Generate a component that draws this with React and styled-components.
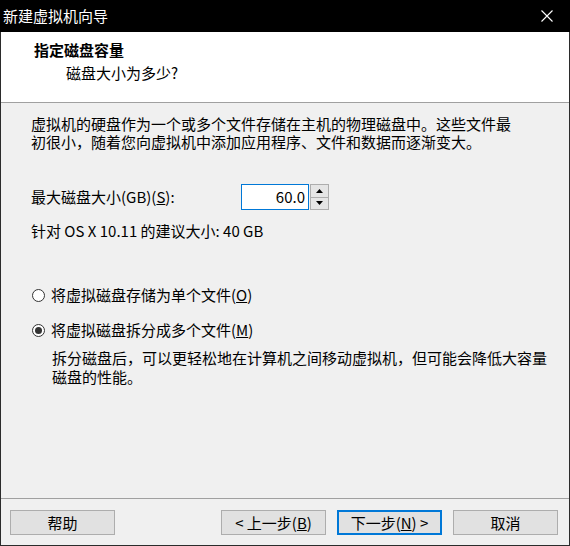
import React from 'react';
import styled, { createGlobalStyle } from 'styled-components';

const GlobalStyle = createGlobalStyle`
  html, body {
    margin: 0;
    padding: 0;
    background: #f0f0f0;
  }
  body {
    font-family: "Noto Sans CJK SC", "Liberation Sans", sans-serif;
    font-size: 15px;
    color: #000;
  }
`;

const Window = styled.div`
  width: 570px;
  height: 546px;
  box-sizing: border-box;
  border: 1px solid #2b2b2b;
  border-top: none;
  display: flex;
  flex-direction: column;
  background: #f0f0f0;
`;

const TitleBar = styled.div`
  height: 32px;
  background: #000;
  color: #fff;
  display: flex;
  align-items: center;
  justify-content: space-between;
  padding-left: 3px;
  line-height: 18px;
  margin: 0 -1px;
`;

const CloseButton = styled.div`
  width: 46px;
  height: 32px;
  display: flex;
  align-items: center;
  justify-content: center;
  margin-right: 0;
`;

const Header = styled.div`
  background: #fff;
  height: 71px;
  border-bottom: 1px solid #a0a0a0;
  padding: 9px 0 0 33px;
  box-sizing: border-box;
  line-height: 18px;
`;

const HeaderTitle = styled.div`
  font-weight: 700;
`;

const HeaderSub = styled.div`
  margin: 5px 0 0 32px;
`;

const Body = styled.div`
  flex: 1;
  padding: 12px 0 0 30px;
  line-height: 18px;
`;

const Paragraph = styled.p`
  margin: 0;
  margin-top: ${(p) => p.$top || 0}px;
  margin-left: ${(p) => p.$indent || 0}px;
  line-height: ${(p) => p.$lh || 18}px;
`;

const SizeRow = styled.div`
  display: flex;
  align-items: center;
  margin-top: 33px;
`;

const SizeLabel = styled.label`
  width: 210px;
`;

const Spinner = styled.div`
  display: flex;
  gap: 1px;
`;

const NumberBox = styled.div`
  width: 68px;
  height: 26px;
  box-sizing: border-box;
  border: 1px solid #0078d7;
  background: #fff;
  display: flex;
  align-items: center;
  justify-content: flex-end;
  padding-right: 3px;
`;

const SpinButtons = styled.div`
  display: flex;
  flex-direction: column;
  width: 19px;
  height: 26px;
`;

const SpinButton = styled.div`
  flex: 1;
  box-sizing: border-box;
  border: 1px solid #adadad;
  border-top: ${(p) => (p.$down ? 'none' : '1px solid #adadad')};
  background: #e5e5e5;
  display: flex;
  align-items: center;
  justify-content: center;
`;

const RadioRow = styled.div`
  display: flex;
  align-items: center;
  margin-top: ${(p) => p.$top}px;
  margin-left: 1px;
`;

const RadioCircle = styled.span`
  width: 13px;
  height: 13px;
  box-sizing: border-box;
  border: 1px solid #333;
  border-radius: 50%;
  background: #fff;
  display: flex;
  align-items: center;
  justify-content: center;
  margin-right: 6px;
  &::after {
    content: '';
    width: 7px;
    height: 7px;
    border-radius: 50%;
    background: ${(p) => (p.$checked ? '#333' : 'transparent')};
  }
`;

const Footer = styled.div`
  border-top: 1px solid #a0a0a0;
  padding: 11px 11px 0 9px;
  height: 47px;
  box-sizing: border-box;
  display: flex;
  gap: 11px;
`;

const Button = styled.div`
  width: 105px;
  height: 25px;
  box-sizing: border-box;
  background: #e1e1e1;
  border: ${(p) => (p.$primary ? '2px solid #0078d7' : '1px solid #adadad')};
  display: flex;
  align-items: center;
  justify-content: center;
  line-height: 18px;
`;

const Spacer = styled.div`
  flex: 1;
`;

function Arrow({ up }) {
  return (
    <svg width="7" height="4" viewBox="0 0 7 4">
      <path d={up ? 'M0 4 L3.5 0 L7 4 Z' : 'M0 0 L3.5 4 L7 0 Z'} fill="#000" />
    </svg>
  );
}

export default function App() {
  return (
    <>
      <GlobalStyle />
      <Window>
        <TitleBar>
          <span>新建虚拟机向导</span>
          <CloseButton>
            <svg width="12" height="12" viewBox="0 0 12 12">
              <path d="M0.5 0.5 L11.5 11.5 M11.5 0.5 L0.5 11.5" stroke="#fff" strokeWidth="1.1" />
            </svg>
          </CloseButton>
        </TitleBar>
        <Header>
          <HeaderTitle>指定磁盘容量</HeaderTitle>
          <HeaderSub>磁盘大小为多少?</HeaderSub>
        </Header>
        <Body>
          <Paragraph>
            虚拟机的硬盘作为一个或多个文件存储在主机的物理磁盘中。这些文件最
            <br />
            初很小，随着您向虚拟机中添加应用程序、文件和数据而逐渐变大。
          </Paragraph>
          <SizeRow>
            <SizeLabel>
              最大磁盘大小(GB)(<u>S</u>):
            </SizeLabel>
            <Spinner>
              <NumberBox>60.0</NumberBox>
              <SpinButtons>
                <SpinButton>
                  <Arrow up />
                </SpinButton>
                <SpinButton $down>
                  <Arrow />
                </SpinButton>
              </SpinButtons>
            </Spinner>
          </SizeRow>
          <Paragraph $top={12}>针对 OS X 10.11 的建议大小: 40 GB</Paragraph>
          <RadioRow $top={46}>
            <RadioCircle />
            <span>
              将虚拟磁盘存储为单个文件(<u>O</u>)
            </span>
          </RadioRow>
          <RadioRow $top={17}>
            <RadioCircle $checked />
            <span>
              将虚拟磁盘拆分成多个文件(<u>M</u>)
            </span>
          </RadioRow>
          <Paragraph $top={9} $indent={21} $lh={19}>
            拆分磁盘后，可以更轻松地在计算机之间移动虚拟机，但可能会降低大容量
            <br />
            磁盘的性能。
          </Paragraph>
        </Body>
        <Footer>
          <Button>帮助</Button>
          <Spacer />
          <Button>
            &lt; 上一步(<u>B</u>)
          </Button>
          <Button $primary>
            下一步(<u>N</u>) &gt;
          </Button>
          <Button>取消</Button>
        </Footer>
      </Window>
    </>
  );
}
